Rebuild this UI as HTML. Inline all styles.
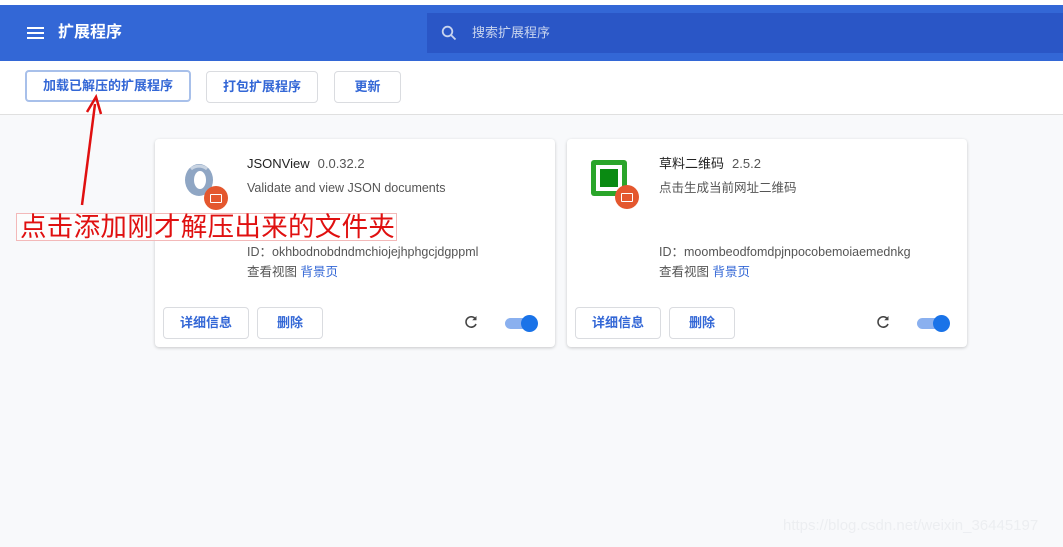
<!DOCTYPE html>
<html><head><meta charset="utf-8"><style>
*{margin:0;padding:0;box-sizing:border-box}
body{width:1063px;height:547px;overflow:hidden;background:#f8f9fb;font-family:"Liberation Sans","Noto Sans CJK SC",sans-serif;position:relative;color:#333}
.top{position:absolute;left:0;top:0;width:1063px;height:5px;background:#fff}
.hdr{position:absolute;left:0;top:5px;width:1063px;height:56px;background:#3367d6}
.hdr .menu{position:absolute;left:27px;top:22px;width:17px;height:12px;border-top:2px solid #fff;border-bottom:2px solid #fff}
.hdr .menu:after{content:"";position:absolute;left:0;top:3px;width:17px;height:2px;background:#fff}
.hdr .t{position:absolute;left:58px;top:17px;color:#fff;font-size:16px;font-weight:bold;line-height:22px}
.search{position:absolute;left:427px;top:8px;width:636px;height:40px;background:#2a56c6}
.search .p{position:absolute;left:45px;top:11px;color:#c8d4ef;font-size:13px;line-height:18px}
.bar{position:absolute;left:0;top:61px;width:1063px;height:54px;background:#fff;border-bottom:1px solid #e0e0e0}
.btn{position:absolute;height:32px;border:1px solid #dadce0;border-radius:4px;background:#fff;color:#3367d6;font-size:13px;font-weight:bold;text-align:center;line-height:30px}
.card{position:absolute;top:139px;width:400px;height:208px;background:#fff;border-radius:4px;box-shadow:0 1px 3px rgba(0,0,0,.2)}
.nm,.ds,.id,.vw{line-height:18px}
.nm{position:absolute;left:92px;top:16px;font-size:13px;color:#222}
.nm span{color:#555;margin-left:8px}
.ds{position:absolute;left:92px;top:40px;font-size:12.5px;color:#555}
.id{position:absolute;left:92px;top:104px;font-size:12.5px;color:#555}
.vw{position:absolute;left:92px;top:124px;font-size:12.5px;color:#555}
.vw b{font-weight:normal;color:#3367d6}
.cb{position:absolute;top:168px;height:32px;border:1px solid #dadce0;border-radius:4px;color:#3367d6;font-size:13px;font-weight:bold;text-align:center;line-height:30px}
.tg{position:absolute;left:350px;top:179px;width:30px;height:11px;border-radius:6px;background:#8ab0ef}
.tg:after{content:"";position:absolute;right:-3px;top:-3px;width:17px;height:17px;border-radius:50%;background:#1a73e8}
.rf{position:absolute;left:308px;top:175px}
.badge{position:absolute;width:24px;height:24px;border-radius:50%;background:#e4572e}
.badge:after{content:"";position:absolute;left:6px;top:8px;width:10px;height:7px;border:1.5px solid #fff;border-radius:1px}
.note{position:absolute;left:16px;top:213px;width:381px;height:28px;border:1px solid #f3b9b9;color:#e01010;font-size:26.5px;line-height:26px;padding-left:3px;white-space:nowrap;letter-spacing:0.3px;background:rgba(255,255,255,.6)}
.wm{position:absolute;left:783px;top:517px;color:#eceef1;font-size:15px}
</style></head><body>
<div class="top"></div>
<div class="hdr"><div class="menu"></div><div class="t">扩展程序</div>
<div class="search"><svg style="position:absolute;left:14px;top:12px" width="16" height="16" viewBox="0 0 16 16"><circle cx="6.5" cy="6.5" r="4.8" fill="none" stroke="#c8d4ef" stroke-width="1.8"/><path d="M10 10l4.5 4.5" stroke="#c8d4ef" stroke-width="1.8"/></svg><div class="p">搜索扩展程序</div></div></div>
<div class="bar">
<div class="btn" style="left:25px;top:9px;width:166px;border:2px solid #a8c0ea;line-height:28px">加载已解压的扩展程序</div>
<div class="btn" style="left:206px;top:10px;width:112px">打包扩展程序</div>
<div class="btn" style="left:334px;top:10px;width:67px">更新</div>
</div>
<div class="card" style="left:155px">
<svg style="position:absolute;left:26px;top:22px" width="40" height="40" viewBox="0 0 40 40"><ellipse cx="18" cy="19" rx="14" ry="16" fill="#8fa6c4"/><ellipse cx="19" cy="19" rx="6" ry="9" fill="#fff"/><path d="M10 8a14 16 0 0 1 16 0" stroke="#c9d4e2" stroke-width="3" fill="none"/></svg>
<div class="badge" style="left:49px;top:47px"></div>
<div class="nm">JSONView<span>0.0.32.2</span></div>
<div class="ds">Validate and view JSON documents</div>
<div class="id">ID：okhbodnobdndmchiojejhphgcjdgppml</div>
<div class="vw">查看视图 <b>背景页</b></div>
<div class="cb" style="left:8px;width:86px">详细信息</div>
<div class="cb" style="left:102px;width:66px">删除</div>
<svg class="rf" width="16" height="16" viewBox="0 0 16 16"><path d="M12.5 5A5.2 5.2 0 1 0 13 10" fill="none" stroke="#444" stroke-width="1.6"/><path d="M13.5 2v4.3H9.2z" fill="#444"/></svg>
<div class="tg"></div>
</div>
<div class="card" style="left:567px">
<div style="position:absolute;left:24px;top:21px;width:36px;height:36px;background:#2aa52a;border-radius:3px"><div style="position:absolute;left:5px;top:5px;width:26px;height:26px;background:#fff"></div><div style="position:absolute;left:9px;top:9px;width:18px;height:18px;background:#0a8a12"></div></div>
<div class="badge" style="left:48px;top:46px"></div>
<div class="nm">草料二维码<span>2.5.2</span></div>
<div class="ds">点击生成当前网址二维码</div>
<div class="id">ID：moombeodfomdpjnpocobemoiaemednkg</div>
<div class="vw">查看视图 <b>背景页</b></div>
<div class="cb" style="left:8px;width:86px">详细信息</div>
<div class="cb" style="left:102px;width:66px">删除</div>
<svg class="rf" width="16" height="16" viewBox="0 0 16 16"><path d="M12.5 5A5.2 5.2 0 1 0 13 10" fill="none" stroke="#444" stroke-width="1.6"/><path d="M13.5 2v4.3H9.2z" fill="#444"/></svg>
<div class="tg"></div>
</div>
<svg style="position:absolute;left:0;top:0" width="200" height="220"><path d="M82 205L95 104" stroke="#e01010" stroke-width="2.5"/><path d="M87 112L96 97L101 114" fill="none" stroke="#e01010" stroke-width="2.5"/></svg>
<div class="note">点击添加刚才解压出来的文件夹</div>
<div class="wm">https://blog.csdn.net/weixin_36445197</div>
</body></html>
